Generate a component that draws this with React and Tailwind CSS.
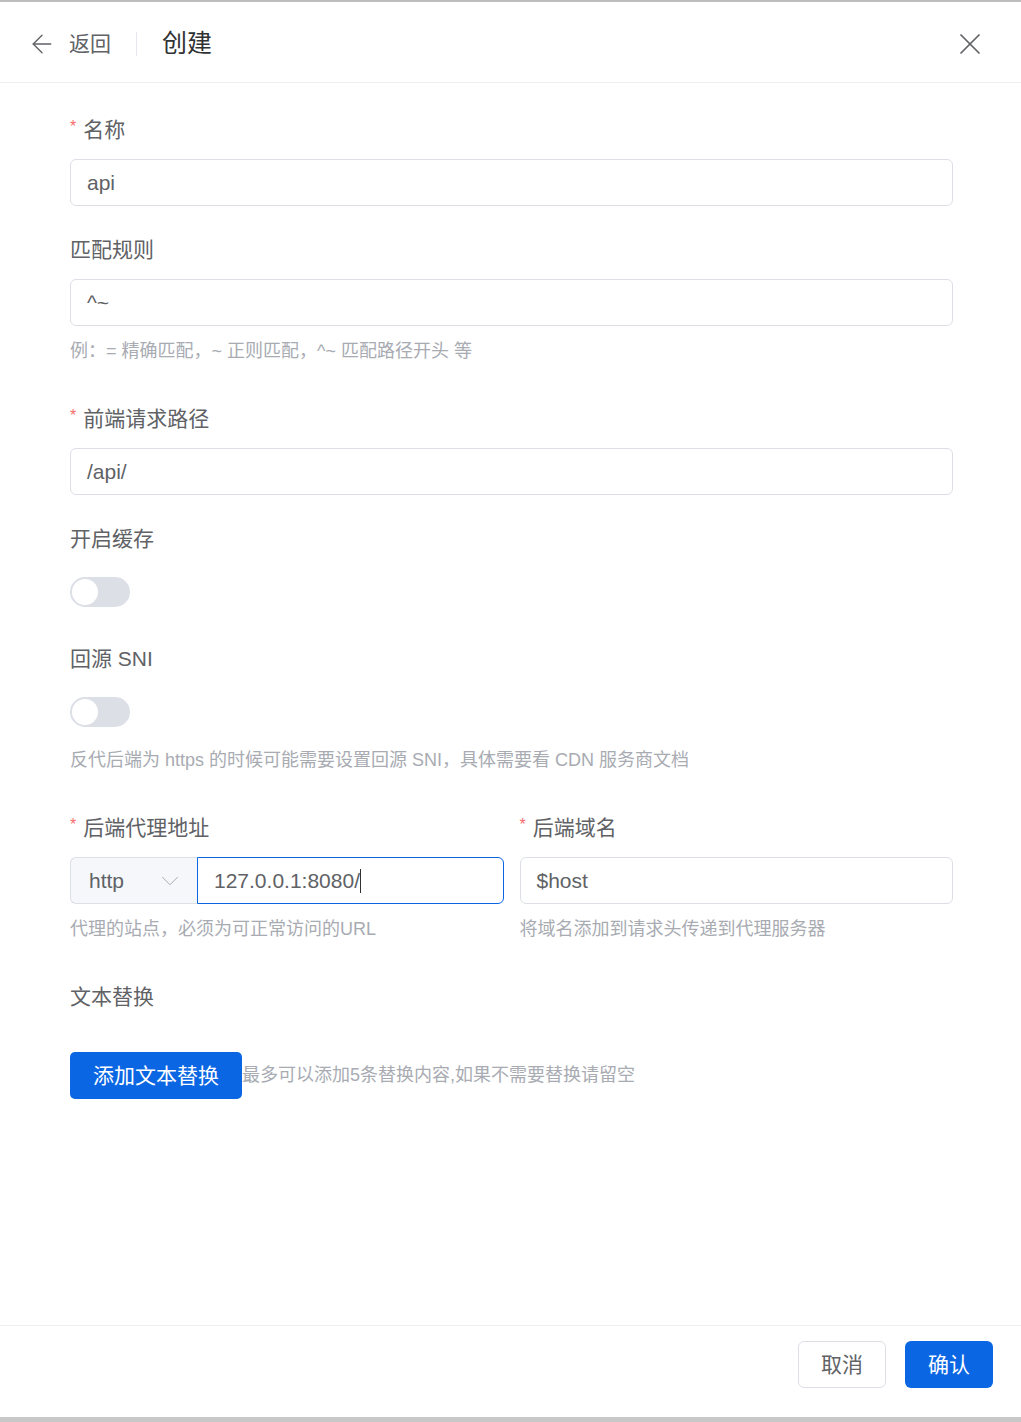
import React from 'react';
import { ArrowLeft, X, ChevronDown } from 'lucide-react';

const FONT = { fontFamily: '"Liberation Sans", "Noto Sans CJK SC", sans-serif' };

function Label({ required, children }) {
  return (
    <div className="h-[30px] mb-[14px] flex items-center text-[21px] leading-[30px] text-[#606266]">
      {required && <span className="text-[#f56c6c] text-[16px] mr-[7px] -mt-[6px]">*</span>}
      {children}
    </div>
  );
}

function Hint({ children }) {
  return (
    <div className="pt-[13px] pb-[12px] text-[18px] leading-[24px] text-[#a8abb2] whitespace-nowrap">
      {children}
    </div>
  );
}

function TextBox({ value }) {
  return (
    <div className="h-[47px] flex items-center px-[16px] border border-[#dcdfe6] rounded-[6px] bg-white text-[21px] text-[#606266]">
      {value}
    </div>
  );
}

function Toggle() {
  return (
    <div className="h-[47px] flex items-center">
      <div className="w-[60px] h-[30px] rounded-full bg-[#dcdfe6] flex items-center px-[2px]">
        <div className="w-[26px] h-[26px] rounded-full bg-white"></div>
      </div>
    </div>
  );
}

export default function App() {
  return (
    <div className="w-[1021px] h-[1422px] flex flex-col bg-white" style={FONT}>
      <div className="h-[2px] bg-[#bdbdbd]"></div>

      {/* Cabecera */}
      <div className="h-[81px] flex items-center justify-between pt-[3px] pl-[27px] pr-[33px] border-b border-[#f0f0f0]">
        <div className="flex items-center">
          <ArrowLeft size={30} strokeWidth={1.1} className="text-[#606266]" />
          <span className="ml-[12px] text-[21px] text-[#606266]">返回</span>
          <div className="w-px h-[24px] bg-[#e4e7ed] mx-[25px]"></div>
          <span className="text-[25px] text-[#303133]">创建</span>
        </div>
        <X size={36} strokeWidth={1.15} className="text-[#606266]" />
      </div>

      {/* Formulario */}
      <div className="flex-1 pl-[70px] pr-[68px] pt-[32px]">
        <div className="mb-[29px]">
          <Label required>名称</Label>
          <TextBox value="api" />
        </div>

        <div className="mb-[29px]">
          <Label>匹配规则</Label>
          <TextBox value="^~" />
          <Hint>例：= 精确匹配，~ 正则匹配，^~ 匹配路径开头 等</Hint>
        </div>

        <div className="mb-[29px]">
          <Label required>前端请求路径</Label>
          <TextBox value="/api/" />
        </div>

        <div className="mb-[29px]">
          <Label>开启缓存</Label>
          <Toggle />
        </div>

        <div className="mb-[29px]">
          <Label>回源 SNI</Label>
          <Toggle />
          <Hint>反代后端为 https 的时候可能需要设置回源 SNI，具体需要看 CDN 服务商文档</Hint>
        </div>

        <div className="grid grid-cols-2 gap-x-[16px] mb-[29px]">
          <div>
            <Label required>后端代理地址</Label>
            <div className="h-[47px] flex">
              <div className="w-[127px] flex items-center justify-between pl-[18px] pr-[12px] bg-[#f5f7fa] border border-r-0 border-[#dcdfe6] rounded-l-[6px] text-[21px] text-[#606266]">
                http
                <ChevronDown size={30} strokeWidth={0.8} className="text-[#a8abb2]" />
              </div>
              <div className="flex-1 flex items-center px-[16px] border-[1.5px] border-[#0b66e4] rounded-r-[6px] text-[21px] text-[#606266]">
                127.0.0.1:8080/
                <span className="inline-block w-px h-[24px] bg-[#303133]"></span>
              </div>
            </div>
            <Hint>代理的站点，必须为可正常访问的URL</Hint>
          </div>
          <div>
            <Label required>后端域名</Label>
            <TextBox value="$host" />
            <Hint>将域名添加到请求头传递到代理服务器</Hint>
          </div>
        </div>

        <div>
          <Label>文本替换</Label>
          <div className="mt-[40px] flex items-center">
            <button className="h-[47px] px-[23px] bg-[#0b66e4] text-white text-[21px] rounded-[5px]">
              添加文本替换
            </button>
            <span className="text-[18px] text-[#a8abb2]">最多可以添加5条替换内容,如果不需要替换请留空</span>
          </div>
        </div>
      </div>

      {/* Pie */}
      <div className="h-[92px] border-t border-[#f0f0f0] flex justify-end items-start pt-[15px] pr-[28px] gap-[19px]">
        <button className="w-[88px] h-[47px] border border-[#dcdfe6] rounded-[6px] bg-white text-[21px] text-[#606266]">
          取消
        </button>
        <button className="w-[88px] h-[47px] rounded-[6px] bg-[#0b66e4] text-[21px] text-white">
          确认
        </button>
      </div>

      <div className="h-[5px] bg-[#c8c8c8]"></div>
    </div>
  );
}
